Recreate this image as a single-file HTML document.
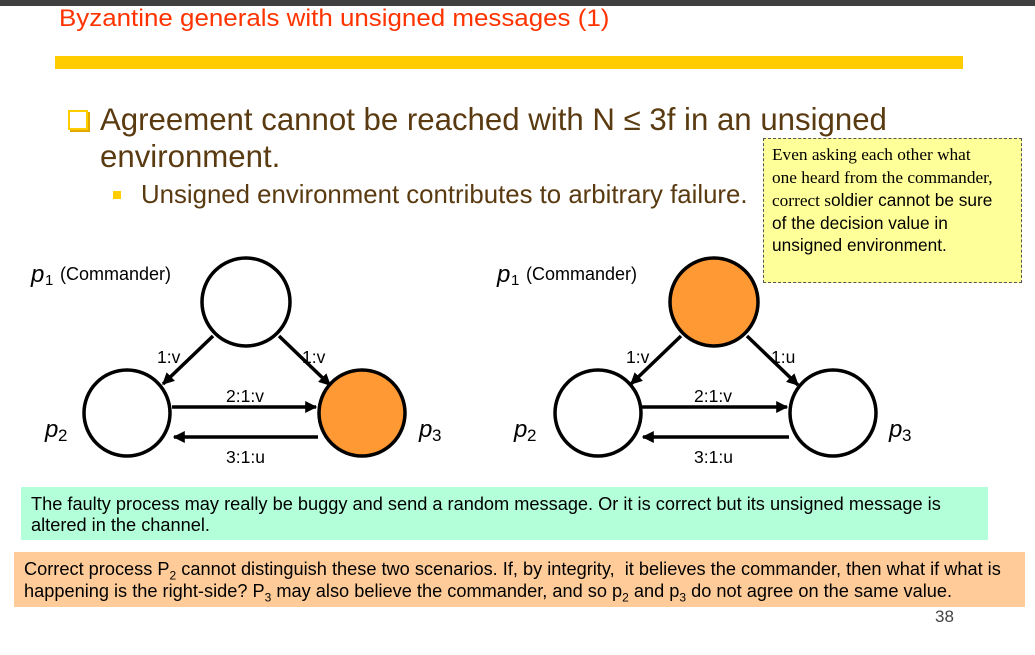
<!DOCTYPE html>
<html><head><style>
body{margin:0;width:1035px;height:655px;background:#fff;position:relative;overflow:hidden;font-family:"Liberation Sans",sans-serif}
.a{position:absolute;white-space:nowrap}
sub{line-height:0;font-size:12px}
</style></head><body>
<div class="a" style="left:0;top:0;width:1035px;height:6px;background:#404040"></div>
<div class="a" style="left:59px;top:5px;font-size:24px;color:#ff3300;transform:scaleX(1.08);transform-origin:left">Byzantine generals with unsigned messages (1)</div>
<div class="a" style="left:55px;top:56px;width:908px;height:13px;background:#ffcc00"></div>
<div class="a" style="left:68px;top:110px;width:16px;height:16px;border:2px solid #ffcc00;box-shadow:2px 2px 0 #e0a800"></div>
<div class="a" style="left:100px;top:102px;font-size:31.2px;color:#5a3a10">Agreement cannot be reached with N ≤ 3f in an unsigned</div>
<div class="a" style="left:100px;top:139px;font-size:31.2px;color:#5a3a10">environment.</div>
<div class="a" style="left:113px;top:191px;width:8px;height:8px;background:#ffcc00"></div>
<div class="a" style="left:141px;top:181px;font-size:25.8px;color:#5a3a10">Unsigned environment contributes to arbitrary failure.</div>
<div class="a" style="left:763px;top:138px;width:249px;height:139px;background:#ffff99;border:1px dashed #555;padding:4px 0 0 8px;font-size:17.3px;line-height:22px;color:#000;white-space:nowrap">
<span style="font-family:'Liberation Serif',serif">Even asking each other what<br>one heard from the commander,<br>correct s</span>oldier cannot be sure<br>of the decision value in<br>unsigned environment.</div>
<svg class="a" style="left:0;top:0" width="1035" height="655">
<defs><marker id="m" markerWidth="12" markerHeight="12" refX="9" refY="5" orient="auto" markerUnits="userSpaceOnUse" viewBox="0 0 10 10"><path d="M0,0L10,5L0,10z" fill="#000"/></marker></defs>
<g stroke="#000" stroke-width="3.5">
<circle cx="246" cy="302" r="44" fill="#fff"/>
<circle cx="127" cy="413" r="43" fill="#fff"/>
<circle cx="362" cy="413" r="43" fill="#ff9933"/>
<line x1="213" y1="336" x2="163" y2="384" marker-end="url(#m)"/>
<line x1="279" y1="336" x2="330" y2="385" marker-end="url(#m)"/>
<line x1="172" y1="407" x2="316" y2="407" marker-end="url(#m)"/>
<line x1="318" y1="437" x2="174" y2="437" marker-end="url(#m)"/>
<circle cx="714" cy="302" r="44" fill="#ff9933"/>
<circle cx="598" cy="413" r="43" fill="#fff"/>
<circle cx="833" cy="413" r="43" fill="#fff"/>
<line x1="681" y1="336" x2="631" y2="384" marker-end="url(#m)"/>
<line x1="747" y1="336" x2="798" y2="385" marker-end="url(#m)"/>
<line x1="641" y1="407" x2="787" y2="407" marker-end="url(#m)"/>
<line x1="789" y1="437" x2="643" y2="437" marker-end="url(#m)"/>
</g>
<g font-family="Liberation Sans,sans-serif" font-size="17.5" fill="#000">
<text x="31" y="282" font-size="24" font-style="italic">p</text><text x="45" y="285" font-size="15">1</text><text x="60" y="280" font-size="18">(Commander)</text>
<text x="45" y="437" font-size="24" font-style="italic">p</text><text x="58" y="441" font-size="17">2</text>
<text x="419" y="437" font-size="24" font-style="italic">p</text><text x="432" y="441" font-size="17">3</text>
<text x="157" y="363">1:v</text><text x="302" y="363">1:v</text>
<text x="226" y="402">2:1:v</text><text x="226" y="463">3:1:u</text>
<text x="497" y="282" font-size="24" font-style="italic">p</text><text x="511" y="285" font-size="15">1</text><text x="526" y="280" font-size="18">(Commander)</text>
<text x="514" y="437" font-size="24" font-style="italic">p</text><text x="527" y="441" font-size="17">2</text>
<text x="889" y="437" font-size="24" font-style="italic">p</text><text x="902" y="441" font-size="17">3</text>
<text x="626" y="363">1:v</text><text x="771" y="363">1:u</text>
<text x="694" y="402">2:1:v</text><text x="694" y="463">3:1:u</text>
</g>
</svg>
<div class="a" style="left:21px;top:487px;width:967px;height:53px;background:#b3ffd9"></div>
<div class="a" style="left:31px;top:494px;font-size:18.2px;line-height:21px;color:#000">The faulty process may really be buggy and send a random message. Or it is correct but its unsigned message is<br>altered in the channel.</div>
<div class="a" style="left:14px;top:552px;width:1011px;height:55px;background:#ffcc99"></div>
<div class="a" style="left:24px;top:558px;font-size:18.2px;line-height:22px;color:#000">Correct process P<sub>2</sub> cannot distinguish these two scenarios. If, by integrity,&nbsp; it believes the commander, then what if what is<br>happening is the right-side? P<sub>3</sub> may also believe the commander, and so p<sub>2</sub> and p<sub>3</sub> do not agree on the same value.</div>
<div class="a" style="left:935px;top:607px;font-size:17px;color:#444">38</div>
</body></html>
